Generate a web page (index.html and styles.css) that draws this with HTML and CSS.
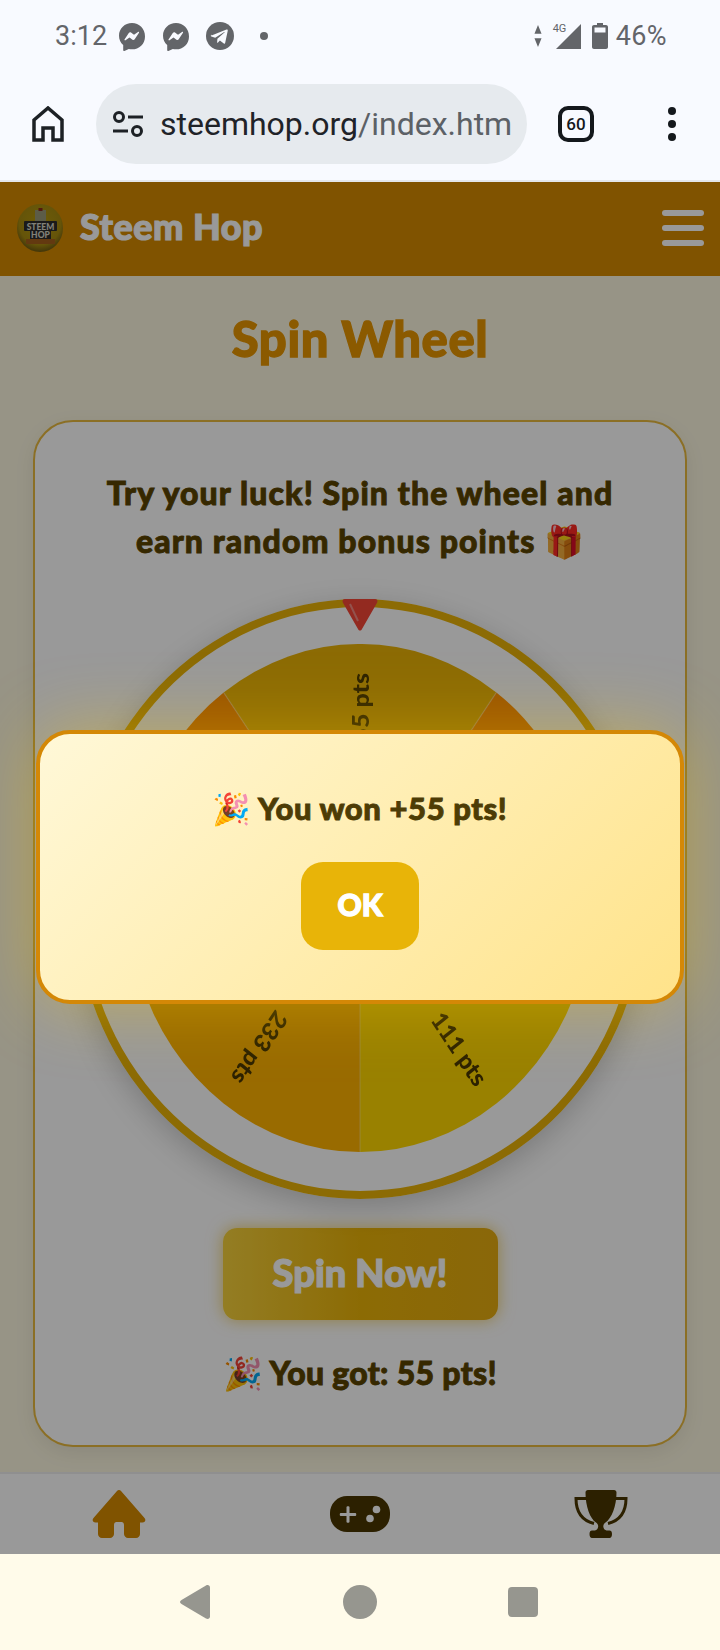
FILE: index.html
```html
<!DOCTYPE html>
<html lang="en">
<head>
<meta charset="utf-8">
<title>Steem Hop - Spin Wheel</title>
<link rel="stylesheet" href="styles.css">
</head>
<body>
<div class="statusbar">
  <div class="status-left">
    <span class="time">3:12</span>
    <svg class="msg" viewBox="0 0 26 28"><path class="ic" d="M13 0C5.800 0 0 5.500 0 12.700c0 3.800 1.600 7 4.200 9.300v5.200c0 .6.600 1 1.200.7l4.400-2c1 .3 2.100.4 3.200.4 7.200 0 13-5.200 13-12.900C26 5.500 20.200 0 13 0z"/><path class="ic-w" d="M5.500 16.500l4.300-6.600c.5-.7 1.500-.9 2.200-.4l3 2.300 4-2.900c.6-.4 1.300.2 1 .8l-4.300 6.600c-.5.700-1.500.9-2.200.4l-3-2.300-4 2.900c-.6.400-1.300-.2-1-.8z"/></svg>
    <svg class="msg msg2" viewBox="0 0 26 28"><path class="ic" d="M13 0C5.800 0 0 5.500 0 12.700c0 3.800 1.600 7 4.200 9.300v5.200c0 .6.600 1 1.200.7l4.400-2c1 .3 2.100.4 3.200.4 7.200 0 13-5.200 13-12.900C26 5.500 20.200 0 13 0z"/><path class="ic-w" d="M5.500 16.500l4.300-6.600c.5-.7 1.500-.9 2.200-.4l3 2.300 4-2.900c.6-.4 1.300.2 1 .8l-4.300 6.600c-.5.700-1.500.9-2.200.4l-3-2.300-4 2.900c-.6.400-1.300-.2-1-.8z"/></svg>
    <svg class="tg" viewBox="0 0 28 28"><circle class="ic" cx="14" cy="14" r="14"/><path class="ic-w" d="M5.500 13.600l15-6c.8-.3 1.500.2 1.200 1.300l-2.500 11.900c-.2.900-.7 1.100-1.400.7l-3.900-2.900-1.900 1.800c-.3.300-.5.400-.9.400l.3-4 7.300-6.600c.3-.3-.1-.4-.5-.2l-9 5.700-3.800-1.200c-.8-.3-.8-.8.100-1.900z"/></svg>
    <span class="dot"></span>
  </div>
  <div class="status-right">
    <svg class="arrows" viewBox="0 0 10 28"><path class="ic" d="M5 0l4.500 11H.5zM5 28L.5 17h9z"/></svg>
    <span class="net">4G</span>
    <svg class="signal" viewBox="0 0 26 26"><path class="ic" d="M26 0v26H0z"/></svg>
    <svg class="battery" viewBox="0 0 16 26"><path class="ic" d="M5 0h6v2h3c1.100 0 2 .9 2 2v20c0 1.100-.9 2-2 2H2c-1.100 0-2-.9-2-2V4c0-1.100.9-2 2-2h3z"/><rect class="ic-w" x="2.500" y="4.500" width="11" height="5"/></svg>
    <span class="pct">46%</span>
  </div>
</div>

<div class="browserbar">
  <svg class="b-home" viewBox="0 0 32 36"><path class="b-stroke" d="M2 34V14L16 2l14 12v20h-9V22H11v12z"/></svg>
  <div class="urlpill">
    <svg class="tune" viewBox="0 0 30 26"><circle class="b-thin" cx="6" cy="6" r="4.500"/><path class="b-thin" d="M15 6h15M0 20h15"/><circle class="b-thin" cx="24" cy="20" r="4.500"/></svg>
    <span class="url"><span class="url-host">steemhop.org</span><span class="url-path">/index.htm</span></span>
  </div>
  <div class="tabs">60</div>
  <div class="kebab"><span></span><span></span><span></span></div>
</div>

<div class="page">
  <header class="topbar">
    <div class="brand">
      <svg class="logo" viewBox="0 0 46 48">
        <defs><radialGradient id="lg" cx="50%" cy="40%" r="60%"><stop offset="0" stop-color="#b89a0c"/><stop offset=".75" stop-color="#a88c10"/><stop offset="1" stop-color="#6e5a12"/></radialGradient></defs>
        <ellipse cx="23" cy="24" rx="23" ry="24" fill="url(#lg)"/>
        <rect x="18" y="6" width="11" height="12" fill="#9a9a78"/>
        <rect x="21.500" y="4" width="4" height="3" fill="#8a2a1a"/>
        <rect x="7" y="17" width="33" height="10" rx="1" fill="#2c2c2c"/>
        <rect x="13" y="26" width="21" height="9" fill="#2c2c2c"/>
        <text class="logo-t" x="23.500" y="25.500">STEEM</text>
        <text class="logo-t" x="23.500" y="33.500">HOP</text>
        <rect x="9" y="35" width="29" height="5" fill="#a5601c"/>
      </svg>
      <span class="brand-name">Steem Hop</span>
    </div>
    <div class="burger"><span></span><span></span><span></span></div>
  </header>

  <main class="main">
    <h1 class="title">Spin Wheel</h1>
    <section class="card">
      <p class="lead">Try your luck! Spin the wheel and<br>earn random bonus points <span class="emoji">🎁</span></p>
      <div class="wheel">
        <svg class="pointer" viewBox="0 0 36 32">
          <path class="ptr" d="M3 0h30c2 0 3 1.500 2.200 3.500L20 30c-1 2-3 2-4 0L.8 3.500C0 1.500 1 0 3 0z"/>
          <path class="ptr-hi" d="M8 5l8 17"/>
        </svg>
        <svg class="disc" viewBox="0 0 508 508" preserveAspectRatio="none">
          <path class="s-a" d="M254 254L104.700 48.500A254 254 0 0 1 403.300 48.500z"/>
          <path class="s-b" d="M254 254L403.300 48.500A254 254 0 0 1 495.600 332.500z"/>
          <path class="s-c" d="M254 254L495.600 332.500A254 254 0 0 1 254 508z"/>
          <path class="s-d" d="M254 254L254 508A254 254 0 0 1 12.400 332.500z"/>
          <path class="s-b" d="M254 254L12.400 332.500A254 254 0 0 1 104.700 48.500z"/>
          <path class="s-line" d="M254 254L254 508M254 254L104.700 48.500M254 254L403.300 48.500"/>
          <text class="seg" transform="translate(254 254) rotate(-90)" x="225" y="0">55 pts</text>
          <text class="seg" transform="translate(254 254) rotate(54)" x="228" y="0">111 pts</text>
          <text class="seg" transform="translate(254 254) rotate(126)" x="228" y="0">233 pts</text>
        </svg>
      </div>
      <button class="spin" type="button">Spin Now!</button>
      <p class="result"><span class="emoji">🎉</span> You got: 55 pts!</p>
    </section>
  </main>

  <nav class="tabbar">
    <svg class="nav-home" viewBox="0 0 54 48"><path class="nav-h" d="M25 1c1-1.300 3-1.300 4 0l23.500 27c1.700 2 .7 4.500-2 4.500H48V44c0 2.300-1.700 4-4 4h-8c-2 0-4-1.700-4-4V35c0-2-1-3-2.500-3h-5C23 32 22 33 22 35v9c0 2.300-2 4-4 4h-8c-2.300 0-4-1.700-4-4V32.500H3.500c-2.700 0-3.700-2.500-2-4.500z"/></svg>
    <svg class="nav-pad" viewBox="0 0 60 36"><rect class="nav-d" width="60" height="36" rx="17"/><path class="nav-cut" d="M16.500 11c0-1 3-1 3 0v6h6c1 0 1 3 0 3h-6v6c0 1-3 1-3 0v-6h-6c-1 0-1-3 0-3h6z"/><ellipse class="nav-cut" cx="46.500" cy="13.500" rx="3.800" ry="3.800"/><ellipse class="nav-cut" cx="40" cy="22.500" rx="3.800" ry="3.800"/></svg>
    <svg class="nav-cup" viewBox="0 0 54 48"><path class="nav-hand" d="M12 8.500H2c0 13 6 22 18 25M42 8.500h10c0 13-6 22-18 25"/><path class="nav-d" d="M14 0h26c1.500 0 2.500 1 2.500 2.500 0 14-5 26-11 30-2 1.500-2.500 3-2 5 .3 1.500 1.500 2.500 3 3h3c1.500 0 2.500 1 2.500 3.500s-1 4-2.500 4H18c-1.500 0-2.500-1.500-2.500-4s1-3.500 2.500-3.500h3c1.500-.5 2.700-1.500 3-3 .5-2 0-3.500-2-5C16 28.500 11.500 16.500 11.500 2.500 11.500 1 12.500 0 14 0z"/></svg>
  </nav>

  <div class="overlay">
    <div class="modal">
      <p class="modal-text"><span class="emoji">🎉</span> You won +55 pts!</p>
      <button class="ok" type="button">OK</button>
    </div>
  </div>
</div>

<div class="sysnav">
  <svg class="sys-back" viewBox="0 0 30 34"><path class="sys" d="M26 .5c2-1 4 0 4 2v29c0 2-2 3-4 2L1.500 19c-2-1.200-2-2.800 0-4z"/></svg>
  <span class="sys-circle"></span>
  <span class="sys-square"></span>
</div>
</body>
</html>
```
FILE: styles.css
```css
* { box-sizing: border-box; }
html, body { margin: 0; padding: 0; }
body {
  width: 720px;
  height: 1650px;
  overflow: hidden;
  background: #f8faff;
  font-family: "Lato", "Noto Sans", sans-serif;
}

/* status bar */
.statusbar {
  height: 72px;
  padding: 0 53px 0 55px;
  display: flex;
  justify-content: space-between;
  align-items: center;
  color: #63656a;
  font-family: "Roboto", sans-serif;
  font-size: 27px;
}
.status-left, .status-right { display: flex; align-items: center; }
.ic { fill: #636569; }
.ic-w { fill: #f8faff; }
.msg { width: 26px; height: 28px; margin: 2px 0 0 12px; display: block; }
.msg2 { margin-left: 18px; }
.tg { width: 28px; height: 28px; margin-left: 17px; display: block; }
.dot { width: 8px; height: 8px; border-radius: 50%; background: #636569; margin-left: 26px; }
.arrows { width: 10px; height: 22px; display: block; margin-right: 13px; }
.net { font-size: 11px; width: 0; position: relative; top: -8px; left: -3px; white-space: nowrap; }
.signal { width: 25px; height: 25px; margin-top: 1px; display: block; }
.battery { width: 16px; height: 26px; margin-left: 11px; display: block; }
.pct { margin-left: 8px; font-size: 27px; letter-spacing: .4px; }

/* browser bar */
.browserbar {
  height: 110px;
  border-bottom: 2px solid #e3e6ea;
  display: flex;
  align-items: center;
  padding: 0 0 4px 32px;
}
.b-home { width: 32px; height: 36px; display: block; }
.b-stroke { fill: none; stroke: #1d2125; stroke-width: 3.500; }
.b-thin { fill: none; stroke: #1d2125; stroke-width: 3; }
.urlpill {
  width: 431px;
  height: 80px;
  margin-left: 32px;
  padding-left: 17px;
  border-radius: 40px;
  background: #e6eaee;
  display: flex;
  align-items: center;
}
.tune { width: 30px; height: 26px; display: block; flex: none; }
.url { margin-left: 17px; font-family: "Roboto", sans-serif; font-size: 32px; white-space: nowrap; }
.url-host { color: #1f2328; }
.url-path { color: #5c6166; }
.tabs {
  width: 36px;
  height: 36px;
  margin-left: 31px;
  border: 4px solid #14181c;
  border-radius: 10px;
  display: flex;
  align-items: center;
  justify-content: center;
  font: 500 17px "Roboto", sans-serif;
  color: #14181c;
}
.kebab { margin-left: 74px; display: flex; flex-direction: column; gap: 5px; }
.kebab span { width: 8px; height: 8px; border-radius: 50%; background: #14181c; }

/* page */
.page {
  position: relative;
  height: 1372px;
  display: flex;
  flex-direction: column;
  background: #fcf7e0;
}
.topbar {
  height: 94px;
  background: #d58a00;
  display: flex;
  align-items: center;
  justify-content: space-between;
  padding: 0 16px 2px 17px;
}
.brand { display: flex; align-items: center; }
.logo { width: 46px; height: 48px; display: block; }
.logo-t { font: 900 8.500px "Lato", sans-serif; fill: #d8d8c8; text-anchor: middle; }
.brand-name {
  margin: -4px 0 0 17px;
  color: #fff;
  font-weight: 900;
  font-size: 36px;
  line-height: 44px;
  -webkit-text-stroke: 1.200px #fff;
  letter-spacing: .5px;
}
.burger { display: flex; flex-direction: column; gap: 9px; }
.burger span { width: 42px; height: 6px; border-radius: 3px; background: #fff; }

.main { flex: 1; padding: 36px 33px 0; }
.title {
  margin: 0 0 50px;
  text-align: center;
  color: #e89600;
  font-size: 49px;
  line-height: 52px;
  padding-bottom: 6px;
  font-weight: 900;
  letter-spacing: .6px;
  -webkit-text-stroke: 1.300px #e89600;
}
.card {
  height: 1027px;
  padding: 47px 0 0;
  background: #fff;
  border: 2px solid #e8b93f;
  border-radius: 40px;
  display: flex;
  flex-direction: column;
  align-items: center;
  box-shadow: 0 6px 20px rgba(0, 0, 0, .08);
}
.lead, .result, .modal-text {
  margin: 0;
  text-align: center;
  color: #5a4400;
  font-weight: 900;
  line-height: 48px;
  -webkit-text-stroke: .9px currentColor;
}
.lead { font-size: 32px; letter-spacing: 1.100px; }
.result { margin-top: 29px; font-size: 32px; letter-spacing: .3px; }
.modal-text { font-size: 31px; letter-spacing: .6px; color: #4d3c05; }
.emoji {
  -webkit-text-stroke: 0;
  font-family: "Noto Color Emoji", sans-serif;
  font-weight: 400;
  line-height: 0;
  letter-spacing: 0;
}
.wheel {
  position: relative;
  flex: none;
  width: 570px;
  height: 600px;
  margin-top: 34px;
  padding: 37px 45px;
  border: 8px solid #eab308;
  border-radius: 50%;
  box-shadow: 0 8px 30px rgba(0, 0, 0, .2);
}
.disc { display: block; width: 464px; height: 508px; filter: blur(.6px); }
.s-a { fill: #eab308; }
.s-b { fill: #ff8c00; }
.s-c { fill: #ffd700; }
.s-d { fill: #ffb300; }
.s-line { fill: none; stroke: #fff; stroke-opacity: .25; stroke-width: 1.500; }
.seg {
  font: 900 25px "Lato", sans-serif;
  fill: #4a3800;
  text-anchor: end;
  dominant-baseline: central;
}
.pointer { position: absolute; top: -8px; left: 259px; width: 36px; height: 32px; }
.ptr { fill: #f54636; }
.ptr-hi { fill: none; stroke: #f58a80; stroke-width: 2; }
.spin {
  margin-top: 29px;
  width: 275px;
  height: 92px;
  padding: 0 0 4px;
  border: 0;
  border-radius: 14px;
  color: #fff;
  background: linear-gradient(90deg, #f6d13c, #eab308 50%, #e6ac10);
  font-family: inherit;
  font-weight: 900;
  font-size: 38px;
  -webkit-text-stroke: 1.200px #fff;
  box-shadow: 0 0 16px rgba(234, 179, 8, .6);
}

/* bottom nav */
.tabbar {
  height: 82px;
  flex: none;
  background: #fff;
  border-top: 2px solid #eee;
  display: flex;
  align-items: center;
  padding: 0 92px;
  justify-content: space-between;
}
.nav-home { width: 54px; height: 48px; display: block; }
.nav-pad { width: 60px; height: 36px; display: block; }
.nav-cup { width: 54px; height: 48px; display: block; }
.nav-h { fill: #d58a00; }
.nav-d { fill: #4a3600; }
.nav-cut { fill: #fff; }
.nav-hand { fill: none; stroke: #4a3600; stroke-width: 3; }

/* overlay + modal */
.overlay {
  position: absolute;
  inset: 0;
  padding-bottom: 2px;
  background: rgba(0, 0, 0, .4);
  display: flex;
  align-items: center;
  justify-content: center;
}
.modal {
  width: 648px;
  padding: 50px;
  border: 4px solid #d48806;
  border-radius: 34px;
  background: linear-gradient(135deg, #fff8d8, #ffe38a);
  box-shadow: 0 0 70px rgba(255, 205, 0, .38);
  display: flex;
  flex-direction: column;
  align-items: center;
}
.ok {
  margin-top: 30px;
  width: 118px;
  height: 88px;
  padding: 0 0 4px;
  border: 0;
  border-radius: 22px;
  background: #e8b408;
  color: #fff;
  font-family: inherit;
  font-weight: 900;
  font-size: 30px;
  -webkit-text-stroke: 1.300px #fff;
}

/* system nav */
.sysnav {
  height: 96px;
  background: #fffbea;
  display: flex;
  align-items: center;
  padding: 0 0 0 180px;
}
.sys { fill: #96968f; }
.sys-back { width: 30px; height: 34px; display: block; }
.sys-circle { width: 34px; height: 34px; border-radius: 50%; background: #96968f; margin-left: 133px; }
.sys-square { width: 30px; height: 30px; border-radius: 4px; background: #96968f; margin-left: 131px; }
```
